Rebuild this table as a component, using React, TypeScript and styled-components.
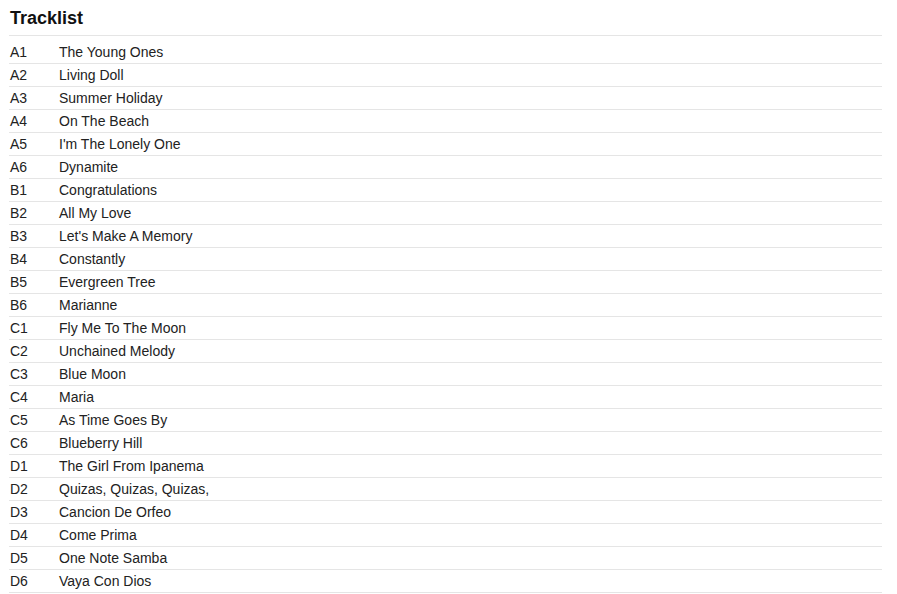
import styled, { createGlobalStyle } from 'styled-components';

const GlobalStyle = createGlobalStyle`
  body {
    margin: 0;
    background: #ffffff;
    font-family: Arial, "Liberation Sans", sans-serif;
    color: #222222;
  }
`;

const Container = styled.section`
  width: 873px;
  padding: 0 0 0 9px;
`;

const Title = styled.h2`
  margin: 0;
  padding: 8px 0 7px 1px;
  font-size: 18px;
  line-height: 20px;
  font-weight: bold;
  color: #111111;
  border-bottom: 1px solid #e5e5e5;
`;

const TrackList = styled.ul`
  list-style: none;
  margin: 5px 0 0;
  padding: 0;
`;

const Track = styled.li`
  display: flex;
  align-items: center;
  height: 22px;
  border-bottom: 1px solid #e5e5e5;
  font-size: 14px;
`;

const Position = styled.span`
  width: 49px;
  padding-left: 1px;
`;

const Name = styled.span``;

const tracks: [string, string][] = [
  ['A1', 'The Young Ones'],
  ['A2', 'Living Doll'],
  ['A3', 'Summer Holiday'],
  ['A4', 'On The Beach'],
  ['A5', "I'm The Lonely One"],
  ['A6', 'Dynamite'],
  ['B1', 'Congratulations'],
  ['B2', 'All My Love'],
  ['B3', "Let's Make A Memory"],
  ['B4', 'Constantly'],
  ['B5', 'Evergreen Tree'],
  ['B6', 'Marianne'],
  ['C1', 'Fly Me To The Moon'],
  ['C2', 'Unchained Melody'],
  ['C3', 'Blue Moon'],
  ['C4', 'Maria'],
  ['C5', 'As Time Goes By'],
  ['C6', 'Blueberry Hill'],
  ['D1', 'The Girl From Ipanema'],
  ['D2', 'Quizas, Quizas, Quizas,'],
  ['D3', 'Cancion De Orfeo'],
  ['D4', 'Come Prima'],
  ['D5', 'One Note Samba'],
  ['D6', 'Vaya Con Dios'],
];

const App = () => {
  return (
    <>
      <GlobalStyle />
      <Container>
        <Title>Tracklist</Title>
        <TrackList>
          {tracks.map(([pos, name]) => (
            <Track key={pos}>
              <Position>{pos}</Position>
              <Name>{name}</Name>
            </Track>
          ))}
        </TrackList>
      </Container>
    </>
  );
};

export default App;
